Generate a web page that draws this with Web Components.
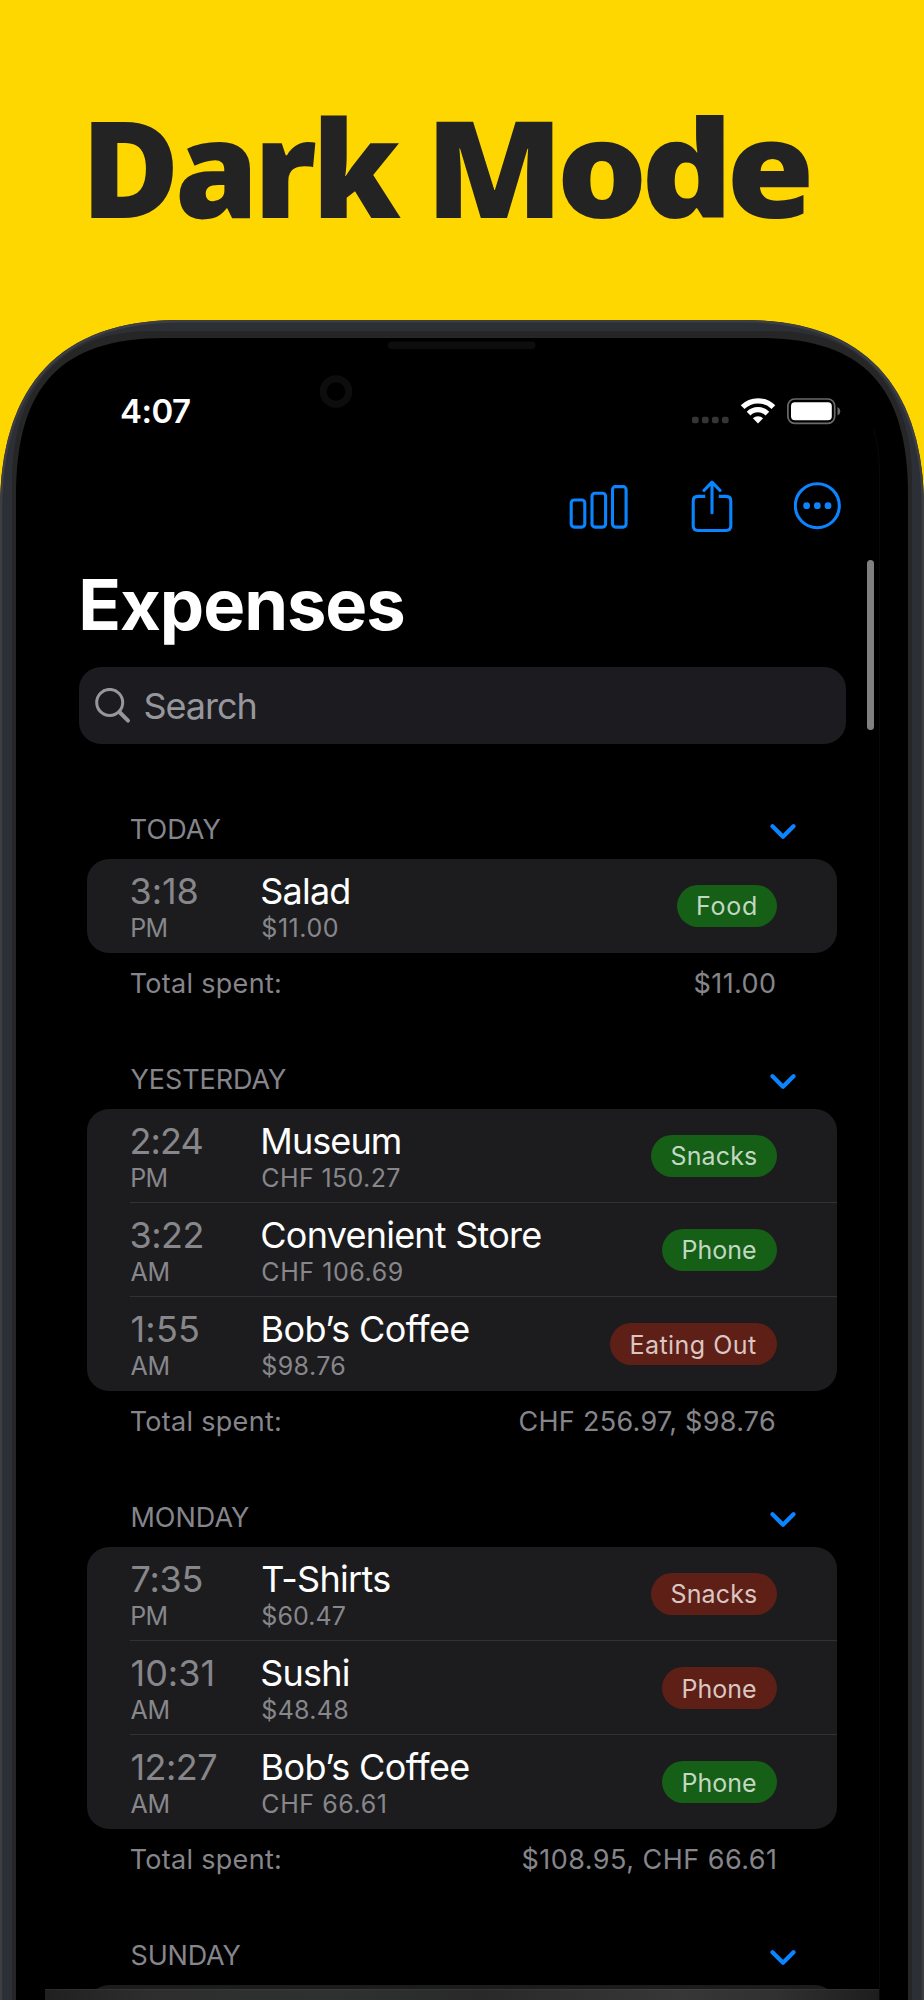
<!DOCTYPE html>
<html lang="en">
<head>
<meta charset="utf-8">
<title>Expenses – Dark Mode</title>
<style>
html,body{margin:0;padding:0;background:#ffd700}
body{width:924px;height:2000px;overflow:hidden;font-family:Inter,"Liberation Sans",sans-serif}
</style>
</head>
<body>
<promo-page></promo-page>
<script>
const define = (name, css, html, setup) => customElements.define(name, class extends HTMLElement {
  connectedCallback() {
    if (this.shadowRoot) return;
    const root = this.attachShadow({ mode: 'open' });
    const t = document.createElement('template');
    t.innerHTML = `<style>${css}</style>` + (typeof html === 'function' ? html(this) : html);
    root.append(t.content.cloneNode(true));
    if (setup) setup(this, root);
  }
});

// Text tracked so that its ink spans exactly the "w" attribute.
const ctx = document.createElement('canvas').getContext('2d');
const NUDGE = { B: 1.2, M: 1, P: 0.7, T: -0.8, Y: -1, A: -1 };
define('fit-text', ':host{display:block;white-space:nowrap;line-height:1;flex:none}', '<slot></slot>', el => {
  const text = el.textContent, w = +el.getAttribute('w'), s = getComputedStyle(el);
  ctx.font = `${s.fontWeight} ${s.fontSize} ${s.fontFamily}`;
  const m = ctx.measureText(text);
  const ink = m.actualBoundingBoxLeft + m.actualBoundingBoxRight;
  const nudge = parseFloat(s.fontSize) < 40 && text !== 'T-Shirts' ? NUDGE[text[0]] || 0 : 0;
  el.style.width = w + 'px';
  el.style.textIndent = m.actualBoundingBoxLeft + nudge + 'px';
  el.style.letterSpacing = ((w - ink - nudge) / (text.length - 1)).toFixed(3) + 'px';
});
const fit = ([text, w], cls = '') => `<fit-text class="${cls}" w="${w}">${text}</fit-text>`;

define('promo-headline', `
  :host{display:flex;box-sizing:border-box;height:320px;padding:98.6px 0 0 91px;color:#232323;
    font:760 134.5px "Open Sans","Noto Sans",sans-serif;gap:35px}
  .wide{transform:scaleX(1.06);transform-origin:0 0}`,
  fit(['Dark', 310]) + fit(['Mode', 352], 'wide'));

define('phone-frame', `
  :host{display:block;position:relative;height:1680px;overflow:hidden;color:#fff}
  svg{position:absolute;left:0;top:0;z-index:-1}`, `
  <svg width="924" height="1680" viewBox="0 320 924 1680" fill="none">
    <path fill="#2d2f37" d="M0 2000V510C0 385 60 320 180 320H744C864 320 924 385 924 510V2000Z"/>
    <path stroke="#3d3e41" stroke-width="2.5" d="M1 2000V510C1 386 61 321.2 180 321.2H744C863 321.2 923 386 923 510V2000"/>
    <path fill="#262626" d="M12 2000V480C12 388 62 331 150 331H774C862 331 912 388 912 480V2000Z"/>
    <path fill="#000" d="M16 2000V495C16 385 62 338 165 338H759C862 338 908 385 908 495V2000Z"/>
    <rect x="388" y="341.5" width="147.5" height="7.5" rx="3.5" fill="#0d0d0d"/>
    <circle cx="336" cy="391.5" r="12.8" stroke="#0d0d0d" stroke-width="7"/>
    <path stroke="#0a0a0a" d="M874 430Q879.5 450 879.5 475V2000"/>
  </svg><slot></slot>`);

define('status-bar', `
  :host{display:flex;box-sizing:border-box;height:150px;padding:75px 83px 0 121px;justify-content:space-between;align-items:flex-start}
  .t{font-size:33px;font-weight:600}
  div{display:flex;gap:11px;margin-top:1px}`,
  fit(['4:07', 69], 't') + `
  <div>
    <svg width="37" height="30" viewBox="0 0 37 30" fill="#353535"><rect y="20.7" width="6.6" height="6.6" rx="2"/><rect x="10" y="20.7" width="6.6" height="6.6" rx="2"/><rect x="20" y="20.7" width="6.6" height="6.6" rx="2"/><rect x="30" y="20.7" width="6.6" height="6.6" rx="2"/></svg>
    <svg width="36" height="30" viewBox="0 0 36 30" fill="none" stroke="#fff"><path stroke-width="5.2" d="M2.6 11.2a21.8 21.8 0 0 1 30.8 0"/><path stroke-width="5.2" d="M8.6 17.6a13.3 13.3 0 0 1 18.8 0"/><path fill="#fff" stroke="none" d="M18 27.4l-5.1-5.2a7.6 7.6 0 0 1 10.2 0z"/></svg>
    <svg width="54" height="30" viewBox="0 0 54 30" fill="none"><rect x=".9" y="3" width="46.8" height="24.4" rx="6.8" stroke="#6a6a6a" stroke-width="1.7"/><rect x="4" y="6.2" width="40.8" height="18" rx="4" fill="#fff"/><path fill="#6a6a6a" d="M50.5 11v8.4q2.8-1.2 2.8-4.2t-2.8-4.2z"/></svg>
  </div>`);

define('tool-bar', `
  :host{display:flex;box-sizing:border-box;height:100px;padding:8px 82px 0 0;justify-content:flex-end;gap:60.5px}
  svg{fill:none;stroke:#0a84ff;stroke-width:3.1;stroke-linecap:round;stroke-linejoin:round}`, `
  <svg width="61" height="56" viewBox="568 478 61 56"><rect x="571.2" y="500" width="13.6" height="27.1" rx="3"/><rect x="592" y="493.2" width="13.6" height="33.9" rx="3"/><rect x="612.5" y="486.6" width="13.6" height="40.5" rx="3"/></svg>
  <svg width="44" height="56" viewBox="689.5 478 44 56"><path stroke-linecap="butt" d="M704.8 496.4H697.4Q692.7 496.4 692.7 501.1V525.8Q692.7 530.5 697.4 530.5H725.6Q730.3 530.5 730.3 525.8V501.1Q730.3 496.4 725.6 496.4H718.2"/><path d="M711.5 512.8V482.2M703.5 490.4L711.5 482.2 719.5 490.4"/></svg>
  <svg width="48" height="56" viewBox="794 478 48 56"><circle cx="817.3" cy="505.7" r="22"/><g fill="#0a84ff" stroke="none"><circle cx="806.6" cy="505.7" r="3.4"/><circle cx="817.3" cy="505.7" r="3.4"/><circle cx="828" cy="505.7" r="3.4"/></g></svg>`);

define('page-title', ':host{display:block;padding-left:82.3px;font-size:70.5px;font-weight:700}', fit(['Expenses', 321]));

define('search-field', `
  :host{display:flex;box-sizing:border-box;height:77px;margin:26.5px 78.5px 0 78.5px;padding:20.9px 16.5px 0;border-radius:22px;background:#1c1c20;color:#96969d;font-size:36px;gap:14.5px}
  svg{flex:none}`, `
  <svg width="36" height="36" viewBox="0 0 36 36" fill="none" stroke="#96969d" stroke-linecap="round"><circle cx="14.7" cy="14.4" r="13" stroke-width="3"/><path stroke-width="4" d="M24.4 24L33 32.6"/></svg>` + fit(['Search', 110]));

define('scroll-thumb', ':host{position:absolute;left:867px;top:240px;width:7px;height:170px;border-radius:4px;background:#808080}', '');

define('category-pill', `
  :host{display:block;box-sizing:border-box;height:42.5px;padding:9.7px 21px 0;border-radius:22px;background:#155f16;color:#c2d8c2;font-size:25px;margin:25.7px 0 0 auto}
  :host([kind=red]){background:#5e1f16;color:#dac6c3}`, '<slot></slot>');

define('expense-row', `
  :host{display:flex;box-sizing:border-box;height:94.15px;margin-left:43px;padding:0 60px 0 1.5px;color:#87878b;font-size:25px;border-bottom:1px solid transparent}
  :host(:not([last])){border-color:#323235}
  .col{padding-top:14.1px;display:flex;flex-direction:column;gap:7px}
  .time{width:130.8px}
  .big{font-size:36px}.name{color:#fff}`, el => {
    const r = el.data;
    return `<div class="col time">${fit(r.time, 'big')}${fit(r.half)}</div>
      <div class="col">${fit(r.name, 'big name')}${fit(r.amount)}</div>
      <category-pill kind="${r.kind}">${fit(r.tag)}</category-pill>`;
  });

define('day-section', `
  :host{display:block;font-size:27px;color:#85858b}
  header,footer{display:flex;box-sizing:border-box;justify-content:space-between;align-items:flex-start}
  header{height:95.7px;padding:52.4px 128.2px 0 131.5px}
  footer{height:60px;padding:16.6px 149px 0 131.5px}
  main{margin:0 87px;border-radius:22px;background:#1c1c1e;min-height:94px}
  svg{margin-top:8.3px}`, el => `
  <header>${fit(el.day.title)}<svg width="26" height="16" viewBox="0 0 26 16" fill="none" stroke="#0a84ff" stroke-width="4.2" stroke-linecap="round" stroke-linejoin="round"><path d="M2.5 2.3L13 12.8 23.5 2.3"/></svg></header>
  <main></main>${el.day.total ? `<footer>${fit(['Total spent:', 148.5])}${fit(el.day.total)}</footer>` : ''}`,
  (el, root) => {
    const rows = el.day.rows;
    rows.forEach((data, i) => {
      const row = document.createElement('expense-row');
      row.data = data;
      if (i === rows.length - 1) row.setAttribute('last', '');
      root.querySelector('main').append(row);
    });
  });

const PM = ['PM', 35], AM = ['AM', 37];
const FOOD = ['Food', 58], SNACKS = ['Snacks', 84.5], PHONE = ['Phone', 73.2], OUT = ['Eating Out', 124.6];
const row = (time, half, name, amount, tag, kind) => ({ time, half, name, amount, tag, kind });
const DAYS = [
  { title: ['TODAY', 89], total: ['$11.00', 80.5], rows: [
    row(['3:18', 66], PM, ['Salad', 87], ['$11.00', 75.5], FOOD, 'green')] },
  { title: ['YESTERDAY', 154.5], total: ['CHF 256.97, $98.76', 255.5], rows: [
    row(['2:24', 71], PM, ['Museum', 137.5], ['CHF 150.27', 137], SNACKS, 'green'),
    row(['3:22', 71], AM, ['Convenient Store', 279], ['CHF 106.69', 139.5], PHONE, 'green'),
    row(['1:55', 66.5], AM, ['Bob’s Coffee', 207], ['$98.76', 82], OUT, 'red')] },
  { title: ['MONDAY', 117.5], total: ['$108.95, CHF 66.61', 252.5], rows: [
    row(['7:35', 70], PM, ['T-Shirts', 128], ['$60.47', 82.5], SNACKS, 'red'),
    row(['10:31', 81], AM, ['Sushi', 86.5], ['$48.48', 85], PHONE, 'red'),
    row(['12:27', 84.7], AM, ['Bob’s Coffee', 207], ['CHF 66.61', 122.5], PHONE, 'green')] },
  { title: ['SUNDAY', 109], rows: [] }
];

define('expense-list', ':host{display:block;margin-top:19.4px}', '', (el, root) => {
  for (const day of DAYS) {
    const s = document.createElement('day-section');
    s.day = day;
    root.append(s);
  }
});

define('bottom-bar', `:host{position:absolute;left:45px;right:45px;bottom:0;height:11px;box-sizing:border-box;border-top:1px solid rgba(255,255,255,.05);
  background:linear-gradient(90deg,#202020,#2d2d2d 12%,#2f3131 35%,#292929 52%,#373737 76%,#303030 88%,#1d1d1d)}`, '');

define('promo-page', ':host{display:block;position:relative;z-index:0;width:924px;height:2000px;overflow:hidden;background:#ffd700}', `
  <promo-headline></promo-headline>
  <phone-frame>
    <status-bar></status-bar>
    <tool-bar></tool-bar>
    <page-title></page-title>
    <search-field></search-field>
    <expense-list></expense-list>
    <scroll-thumb></scroll-thumb>
    <bottom-bar></bottom-bar>
  </phone-frame>`);
</script>
</body>
</html>
